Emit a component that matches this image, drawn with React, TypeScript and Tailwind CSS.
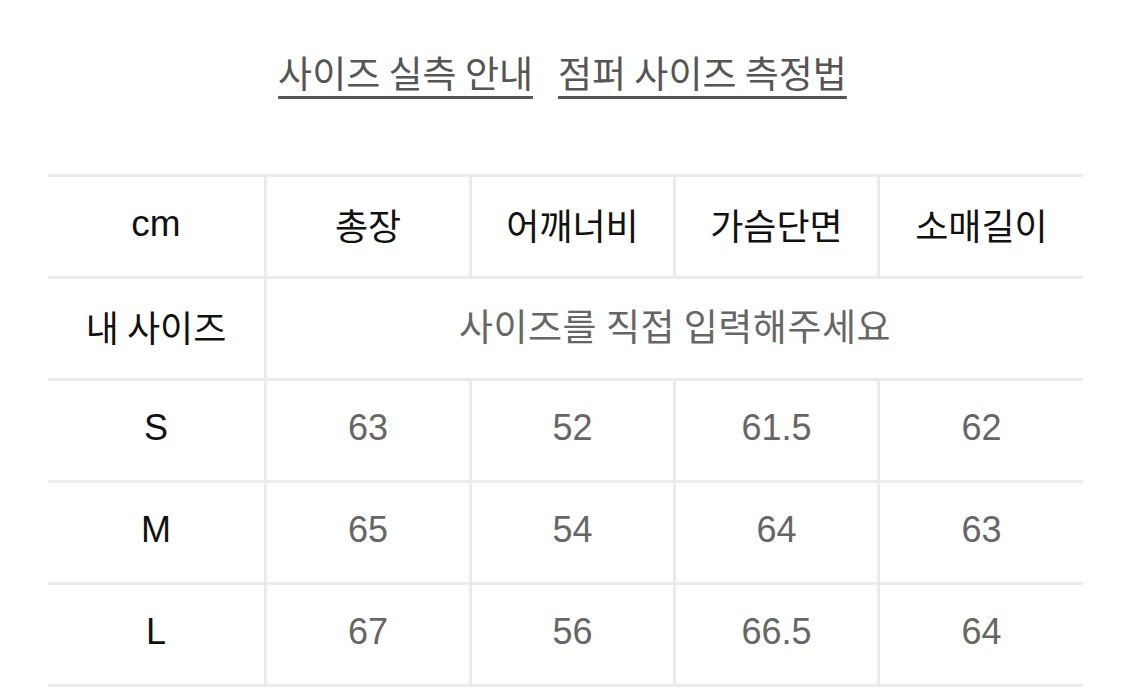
const HEADERS = ['총장', '어깨너비', '가슴단면', '소매길이']

const ROWS = [
  { size: 'S', values: ['63', '52', '61.5', '62'] },
  { size: 'M', values: ['65', '54', '64', '63'] },
  { size: 'L', values: ['67', '56', '66.5', '64'] },
]

const latin = "font-['Liberation_Sans','Noto_Sans_CJK_KR',sans-serif]"
const korean = "font-['Noto_Sans_CJK_KR',sans-serif]"

function Cell({ children, first, className }: { children: React.ReactNode; first?: boolean; className?: string }) {
  return (
    <div
      className={`flex h-full items-center justify-center pb-[6px] ${first ? '' : 'border-l-[3px] border-[#ebebeb]'} ${className ?? ''}`}
    >
      {children}
    </div>
  )
}

export default function App() {
  return (
    <div className="h-[690px] w-[1125px] overflow-hidden bg-white">
      <div className={`flex justify-center gap-[25px] pt-[46px] text-[37px] leading-[52px] text-[#555] ${korean}`}>
        <span className="underline decoration-[3px] underline-offset-[8px]">사이즈 실측 안내</span>
        <span className="underline decoration-[3px] underline-offset-[8px]">점퍼 사이즈 측정법</span>
      </div>

      <div className="ml-[48px] mt-[76px] w-[1035px] border-b-[3px] border-[#ebebeb]">
        <div className="grid h-[102px] grid-cols-[216px_205px_204px_204px_206px] border-t-[3px] border-[#ebebeb]">
          <Cell first className={`${latin} text-[37px] text-[#111]`}>cm</Cell>
          {HEADERS.map((h) => (
            <Cell key={h} className={`${korean} text-[36px] text-[#111]`}>
              {h}
            </Cell>
          ))}
        </div>

        <div className="grid h-[102px] grid-cols-[216px_819px] border-t-[3px] border-[#ebebeb]">
          <Cell first className={`${korean} text-[36px] text-[#111]`}>내 사이즈</Cell>
          <Cell className={`${korean} text-[37px] tracking-[0.5px] text-[#666]`}>사이즈를 직접 입력해주세요</Cell>
        </div>

        {ROWS.map((row) => (
          <div
            key={row.size}
            className="grid h-[102px] grid-cols-[216px_205px_204px_204px_206px] border-t-[3px] border-[#ebebeb]"
          >
            <Cell first className={`${latin} text-[36px] text-[#111]`}>{row.size}</Cell>
            {row.values.map((v, i) => (
              <Cell key={i} className={`${latin} text-[36px] text-[#666]`}>
                {v}
              </Cell>
            ))}
          </div>
        ))}
      </div>
    </div>
  )
}
